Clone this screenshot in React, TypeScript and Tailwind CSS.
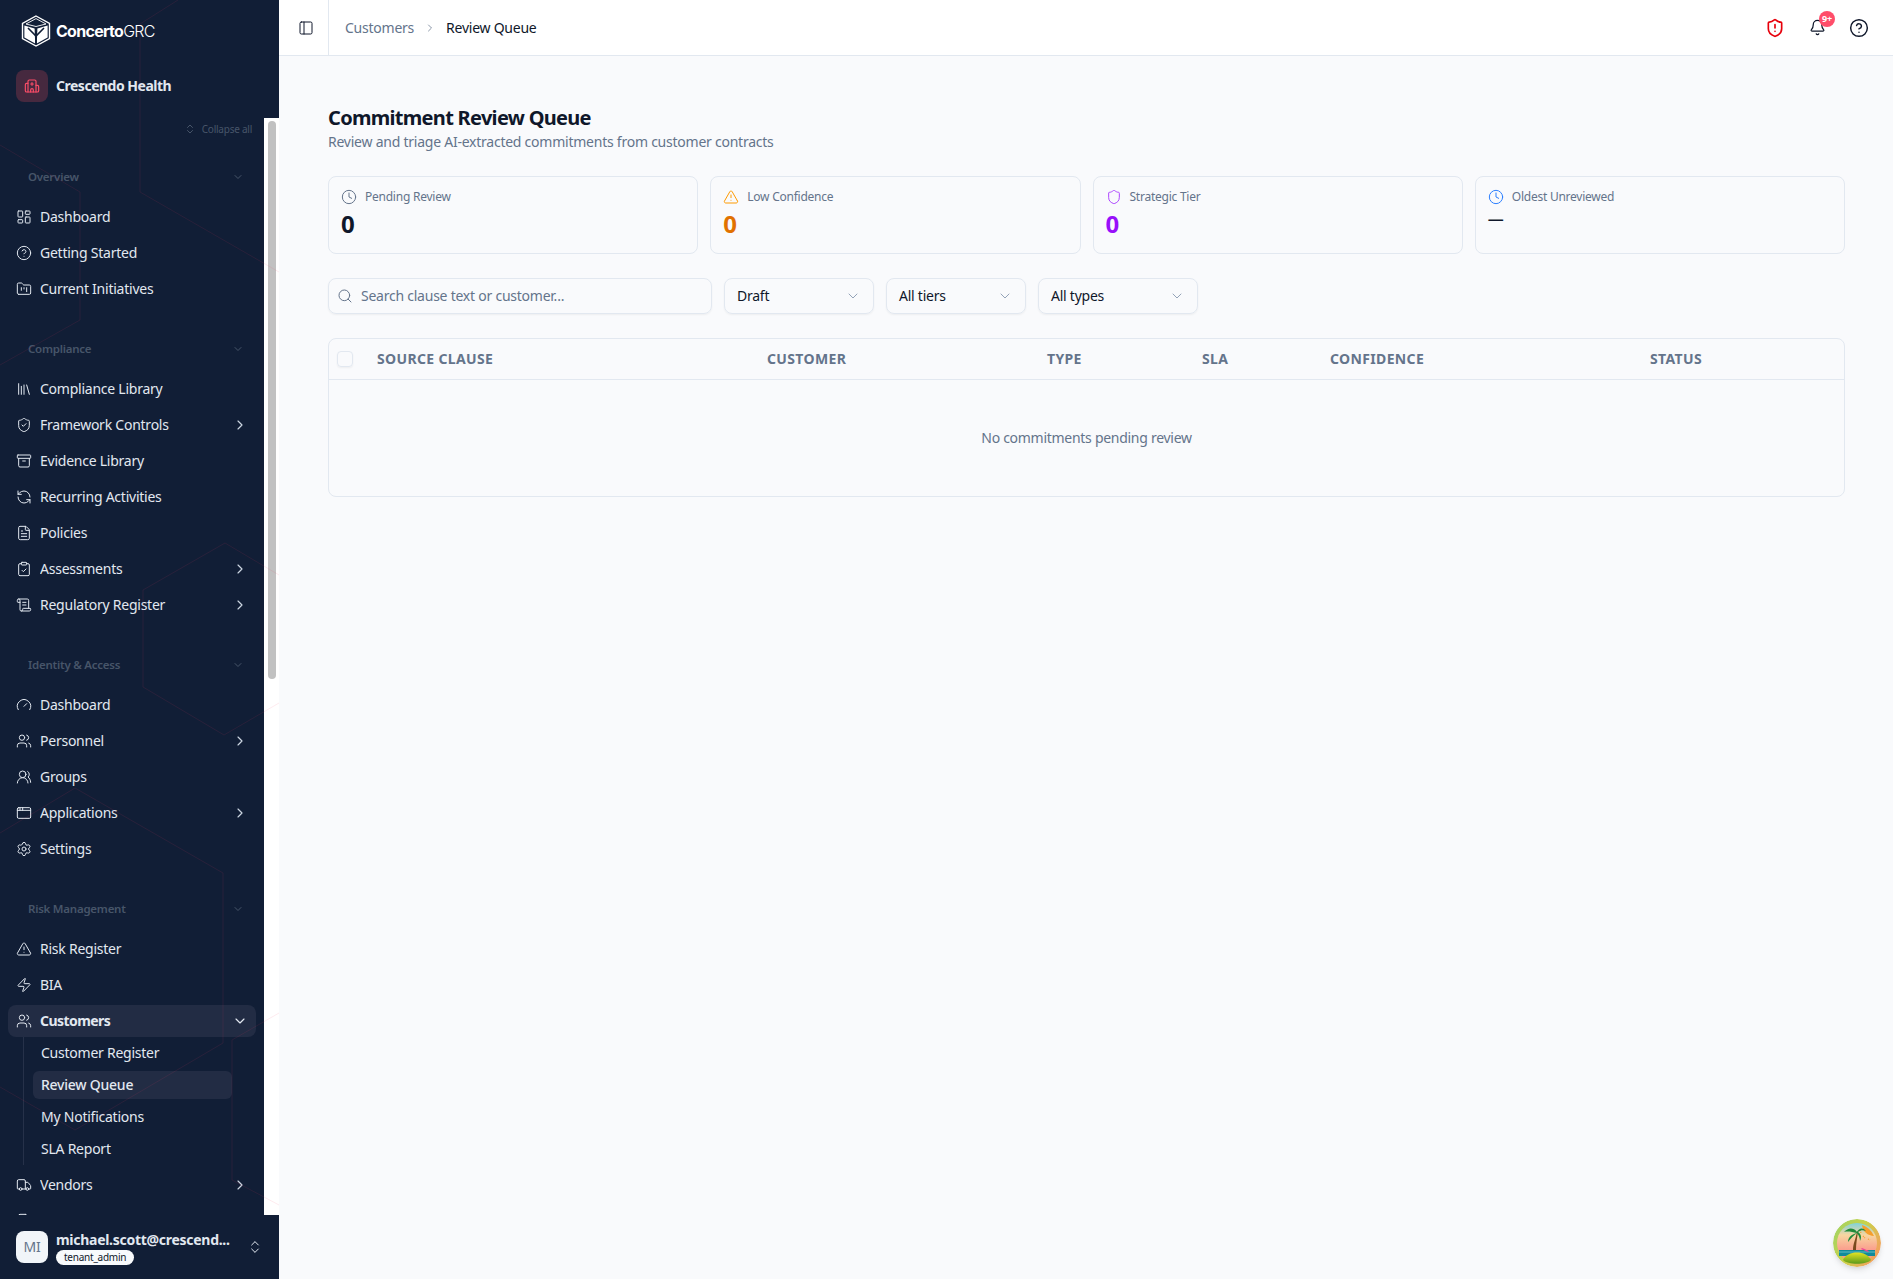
import React from 'react';
import {
  AppWindow, Archive, Bell, ChevronDown, ChevronRight, ChevronsUpDown, CircleHelp, ClipboardCheck, Clock,
  FileText, FolderKanban, Gauge, Hospital, LayoutDashboard, Library, PanelLeft, RefreshCcw, ScrollText,
  Search, Settings, Shield, ShieldAlert, ShieldCheck, TriangleAlert, Truck, Users, UsersRound, Zap,
} from 'lucide-react';

type NavItem = { label: string; icon: React.ElementType; more?: boolean };

const sections: { title: string; items: NavItem[] }[] = [
  {
    title: 'Overview',
    items: [
      { label: 'Dashboard', icon: LayoutDashboard },
      { label: 'Getting Started', icon: CircleHelp },
      { label: 'Current Initiatives', icon: FolderKanban },
    ],
  },
  {
    title: 'Compliance',
    items: [
      { label: 'Compliance Library', icon: Library },
      { label: 'Framework Controls', icon: ShieldCheck, more: true },
      { label: 'Evidence Library', icon: Archive },
      { label: 'Recurring Activities', icon: RefreshCcw },
      { label: 'Policies', icon: FileText },
      { label: 'Assessments', icon: ClipboardCheck, more: true },
      { label: 'Regulatory Register', icon: ScrollText, more: true },
    ],
  },
  {
    title: 'Identity & Access',
    items: [
      { label: 'Dashboard', icon: Gauge },
      { label: 'Personnel', icon: Users, more: true },
      { label: 'Groups', icon: UsersRound },
      { label: 'Applications', icon: AppWindow, more: true },
      { label: 'Settings', icon: Settings },
    ],
  },
];

const NavRow = ({ item }: { item: NavItem }) => {
  const Icon = item.icon;
  return (
    <div className="flex h-8 items-center gap-2 rounded-lg px-2 text-sm text-[#e2e8f0]">
      <Icon className="h-4 w-4 shrink-0" strokeWidth={1.5} />
      <span className="flex-1 truncate">{item.label}</span>
      {item.more && <ChevronRight className="h-4 w-4 text-[#cbd5e1]" strokeWidth={1.75} />}
    </div>
  );
};

const SectionHeader = ({ title }: { title: string }) => (
  <div className="mb-2 flex h-8 items-center justify-between pl-7 pr-5 text-[11.5px] font-semibold text-[#475569]">
    <span>{title}</span>
    <ChevronDown className="h-3 w-3" />
  </div>
);

const Logo = () => (
  <svg viewBox="0 0 30 32" className="h-[32px] w-[30px] shrink-0">
    <path d="M15 1 L28.5 8.5 V23.5 L15 31 L1.5 23.5 V8.5 Z" fill="none" stroke="#fff" strokeWidth="1.4" />
    <path d="M15 3.6 L25 9 L15 11.5 L5 9 Z" fill="none" stroke="#fff" strokeWidth="0.9" />
    <path d="M3.4 10.4 L13.6 13.4 L14.2 28.4 L3.4 22.4 Z" fill="#fff" />
    <path d="M26.6 10.4 L16.4 13.4 L15.8 28.4 L26.6 22.4 Z" fill="#fff" />
    <path d="M7 13 L15 21 L23 13 M15 21 V29" fill="none" stroke="#111e36" strokeWidth="1.6" />
  </svg>
);

const BeachAvatar = () => (
  <svg viewBox="0 0 48 48" className="h-12 w-12 rounded-full shadow-md">
    <defs>
      <linearGradient id="ring" x1="0" y1="0" x2="1" y2="0.6">
        <stop offset="0" stopColor="#9bd468" />
        <stop offset="0.55" stopColor="#c9d24a" />
        <stop offset="1" stopColor="#f2a25c" />
      </linearGradient>
      <linearGradient id="sky" x1="0" y1="0" x2="0" y2="1">
        <stop offset="0" stopColor="#7fd3d8" />
        <stop offset="0.3" stopColor="#f7d6a0" />
        <stop offset="0.7" stopColor="#fb9a8c" />
      </linearGradient>
      <linearGradient id="isle" x1="0" y1="0" x2="0" y2="1">
        <stop offset="0" stopColor="#e4e322" />
        <stop offset="1" stopColor="#5a9a1c" />
      </linearGradient>
    </defs>
    <circle cx="24" cy="24" r="24" fill="url(#ring)" />
    <circle cx="24" cy="24" r="20" fill="url(#sky)" />
    <path d="M29 6 A12 12 0 0 0 41 17 A20 20 0 0 0 29 6 Z" fill="#f59e2c" />
    <path d="M27 11 L28 14 M30 17 L32 19 M35 20 L37 21" stroke="#f59e2c" strokeWidth="1.2" strokeDasharray="1 1" />
    <path d="M6 31 H42 V37 H6 Z" fill="#128a9a" />
    <path d="M6 33 H42" stroke="#7fd3d8" strokeWidth="0.7" />
    <path d="M24 12 C23 20 20 24 20 31 H23 C23 24 24 20 25 13 Z" fill="#7a4a1e" />
    <path d="M24 13 C20 8 15 9 11 13 C15 12 19 13 24 14 C19 15 15 18 15 23 C18 19 21 16 24 14 C26 17 27 19 27 22 C29 18 28 15 25 13 C28 11 30 11 33 12 C30 8 26 9 24 13 Z" fill="#1f8a3a" />
    <path d="M29 29 L36 32 L35 33 L28 30 Z" fill="#ec4899" />
    <path d="M10 41 C14 31 34 31 38 41 C33 46 15 46 10 41 Z" fill="url(#isle)" />
  </svg>
);

const StatCard = ({ icon: Icon, iconClass, label, children }: { icon: React.ElementType; iconClass: string; label: string; children: React.ReactNode }) => (
  <div className="h-[78px] rounded-lg border border-[#e2e8f0] px-3 pt-3">
    <div className="flex h-4 items-center gap-2 text-xs text-[#64748b]">
      <Icon className={`h-4 w-4 ${iconClass}`} strokeWidth={1.5} />
      <span>{label}</span>
    </div>
    {children}
  </div>
);

const Select = ({ label, width }: { label: string; width: string }) => (
  <div className={`flex h-9 items-center justify-between rounded-lg border border-[#e2e8f0] pl-3 pr-3 text-sm text-[#0f172a] shadow-xs ${width}`}>
    <span>{label}</span>
    <ChevronDown className="h-4 w-4 text-[#94a3b8]" strokeWidth={1.5} />
  </div>
);

export default function App() {
  return (
    <div className="flex h-[1279px] w-[1893px] overflow-hidden bg-[#f9fafc] font-['Noto_Sans',sans-serif] tracking-[-0.015em]">
      {/* Sidebar */}
      <aside className="relative flex w-[279px] shrink-0 flex-col bg-[#111e36]">
        <div className="px-4 pb-4 pt-[15px]">
          <div className="flex h-[31px] items-center gap-[5px] pl-[5px]">
            <Logo />
            <span className="font-['Inter',sans-serif] text-base tracking-[-0.045em] text-white">
              <span className="font-bold">Concerto</span>
              <span className="font-light">GRC</span>
            </span>
          </div>
          <div className="mt-6 flex h-8 items-center gap-2">
            <div className="flex h-8 w-8 items-center justify-center rounded-lg bg-[#46293f]">
              <Hospital className="h-4 w-4 text-[#fb4d68]" strokeWidth={1.75} />
            </div>
            <span className="text-sm font-bold tracking-[-0.035em] text-[#e2e8f0]">Crescendo Health</span>
          </div>
        </div>

        <div className="flex min-h-0 flex-1">
          <nav className="w-[264px] overflow-hidden">
            <div className="flex h-[43px] items-start justify-end gap-[6px] pr-3 pt-[3px] text-[10px] leading-4 text-[#475569]">
              <ChevronsUpDown className="mt-[2px] h-3 w-3" />
              <span>Collapse all</span>
            </div>
            {sections.map((section) => (
              <div key={section.title} className="mb-7">
                <SectionHeader title={section.title} />
                <div className="flex flex-col gap-1 px-2">
                  {section.items.map((item) => (
                    <NavRow key={item.label} item={item} />
                  ))}
                </div>
              </div>
            ))}
            <SectionHeader title="Risk Management" />
            <div className="flex flex-col gap-1 px-2">
              <NavRow item={{ label: 'Risk Register', icon: TriangleAlert }} />
              <NavRow item={{ label: 'BIA', icon: Zap }} />
              <div>
                <div className="flex h-8 items-center gap-2 rounded-lg bg-[#222c44] px-2 text-sm font-bold tracking-[-0.04em] text-[#e2e8f0]">
                  <Users className="h-4 w-4 shrink-0" strokeWidth={1.5} />
                  <span className="flex-1">Customers</span>
                  <ChevronDown className="h-4 w-4" strokeWidth={1.75} />
                </div>
                <div className="ml-[15px] mr-6 flex flex-col gap-1 border-l border-[#263149] py-[2px] pl-[9px] text-sm text-[#e2e8f0]">
                  <div className="flex h-7 items-center px-2">Customer Register</div>
                  <div className="flex h-7 items-center rounded-md bg-[#222c44] px-2 font-medium">Review Queue</div>
                  <div className="flex h-7 items-center px-2">My Notifications</div>
                  <div className="flex h-7 items-center px-2">SLA Report</div>
                </div>
              </div>
              <NavRow item={{ label: 'Vendors', icon: Truck, more: true }} />
              <div className="flex h-8 items-center gap-2 px-2 text-[#e2e8f0]">
                <FileText className="h-4 w-4" strokeWidth={1.5} />
              </div>
            </div>
          </nav>
          {/* Scrollbar */}
          <div className="w-[15px] bg-white pl-1 pr-[3px] pt-[3px]">
            <div className="h-[558px] rounded-full bg-[#c1c1c1]" />
          </div>
        </div>

        <div className="flex h-16 items-center gap-2 px-4">
          <div className="flex h-8 w-8 shrink-0 items-center justify-center rounded-lg bg-[#f1f5f9] text-sm text-[#64748b]">MI</div>
          <div className="min-w-0 flex-1">
            <div className="whitespace-nowrap text-sm font-bold leading-5 tracking-[-0.02em] text-[#e2e8f0]">michael.scott@crescend...</div>
            <span className="flex h-[15px] w-fit items-center rounded-full bg-[#f8fafc] px-2 text-[10px] text-[#0f172a]">tenant_admin</span>
          </div>
          <ChevronsUpDown className="h-4 w-4 shrink-0 text-[#e2e8f0]" strokeWidth={1.5} />
        </div>

        {/* faint hexagon pattern over the sidebar */}
        <svg className="pointer-events-none absolute inset-0 h-full w-full" viewBox="0 0 279 1279" fill="none" stroke="#f43f5e" strokeOpacity="0.1">
          <path d="M0 145 L80 192 V320 M178 0 L140 24 V192 L279 272 M0 365 L80 320" />
          <path d="M279 575 L225 543 L143 590 V687 L224 735 L279 703" />
          <path d="M0 833 L75 788 L223 873 V1043 L75 1130 L0 1087" />
          <path d="M279 1013 L232 1040 V1180 L279 1205" />
        </svg>
      </aside>

      {/* Main */}
      <div className="flex min-w-0 flex-1 flex-col">
        <header className="flex h-[56px] shrink-0 items-center border-b border-[#e2e8f0] bg-white">
          <div className="flex h-full w-[50px] items-center border-r border-[#e2e8f0] pl-[19px]">
            <PanelLeft className="h-4 w-4 text-[#0f172a]" strokeWidth={1.5} />
          </div>
          <div className="flex flex-1 items-center pl-4 text-sm">
            <span className="text-[#64748b]">Customers</span>
            <ChevronRight className="mx-2.5 h-3 w-3 text-[#64748b]" strokeWidth={1.5} />
            <span className="text-[#0f172a]">Review Queue</span>
          </div>
          <div className="flex items-center pr-[13px]">
            <div className="flex w-[42px] justify-center">
              <ShieldAlert className="h-5 w-5 text-[#e7000b]" strokeWidth={2} />
            </div>
            <div className="relative flex w-[42px] justify-center">
              <Bell className="h-[17px] w-[17px] text-[#0f172a]" strokeWidth={1.75} />
              <span className="absolute -top-2 left-[23px] flex h-4 w-4 items-center justify-center rounded-full bg-[#ff4d6a] text-[9px] font-bold text-white">9+</span>
            </div>
            <div className="flex w-[42px] justify-center">
              <CircleHelp className="h-5 w-5 text-[#0f172a]" strokeWidth={1.75} />
            </div>
          </div>
        </header>

        <main className="relative flex-1 pb-12 pl-[49px] pr-12 pt-12">
          <h1 className="text-xl font-bold leading-7 tracking-[-0.035em] text-[#0f172a]">Commitment Review Queue</h1>
          <p className="text-sm leading-5 text-[#64748b]">Review and triage AI-extracted commitments from customer contracts</p>

          <div className="mt-6 grid grid-cols-4 gap-3">
            <StatCard icon={Clock} iconClass="text-[#64748b]" label="Pending Review">
              <div className="mt-[3px] text-2xl font-bold leading-8 text-[#0f172a]">0</div>
            </StatCard>
            <StatCard icon={TriangleAlert} iconClass="text-amber-500" label="Low Confidence">
              <div className="mt-[3px] text-2xl font-bold leading-8 text-amber-600">0</div>
            </StatCard>
            <StatCard icon={Shield} iconClass="text-purple-500" label="Strategic Tier">
              <div className="mt-[3px] text-2xl font-bold leading-8 text-purple-600">0</div>
            </StatCard>
            <StatCard icon={Clock} iconClass="text-blue-500" label="Oldest Unreviewed">
              <div className="text-base font-semibold leading-7 text-[#0f172a]">—</div>
            </StatCard>
          </div>

          <div className="mt-6 flex gap-3">
            <div className="flex h-9 w-[384px] items-center gap-2 rounded-lg border border-[#e2e8f0] pl-2 pr-3 text-sm text-[#64748b] shadow-xs">
              <Search className="h-4 w-4" strokeWidth={1.5} />
              <span>Search clause text or customer...</span>
            </div>
            <Select label="Draft" width="w-[150px]" />
            <Select label="All tiers" width="w-[140px]" />
            <Select label="All types" width="w-[160px]" />
          </div>

          <div className="mt-6 h-[159px] rounded-lg border border-[#e2e8f0]">
            <div className="grid h-[41px] grid-cols-[48px_390px_280px_155px_128px_320px_1fr] items-center border-b border-[#e2e8f0] text-sm font-bold uppercase tracking-[0.025em] text-[#64748b]">
              <div className="pl-2">
                <div className="h-4 w-4 rounded-[4px] border border-[#e2e8f0] shadow-xs" />
              </div>
              <div>Source Clause</div>
              <div>Customer</div>
              <div>Type</div>
              <div>SLA</div>
              <div>Confidence</div>
              <div>Status</div>
            </div>
            <div className="flex h-[116px] items-center justify-center text-sm tracking-[-0.02em] text-[#64748b]">No commitments pending review</div>
          </div>

          <div className="absolute bottom-3 right-3">
            <BeachAvatar />
          </div>
        </main>
      </div>
    </div>
  );
}
